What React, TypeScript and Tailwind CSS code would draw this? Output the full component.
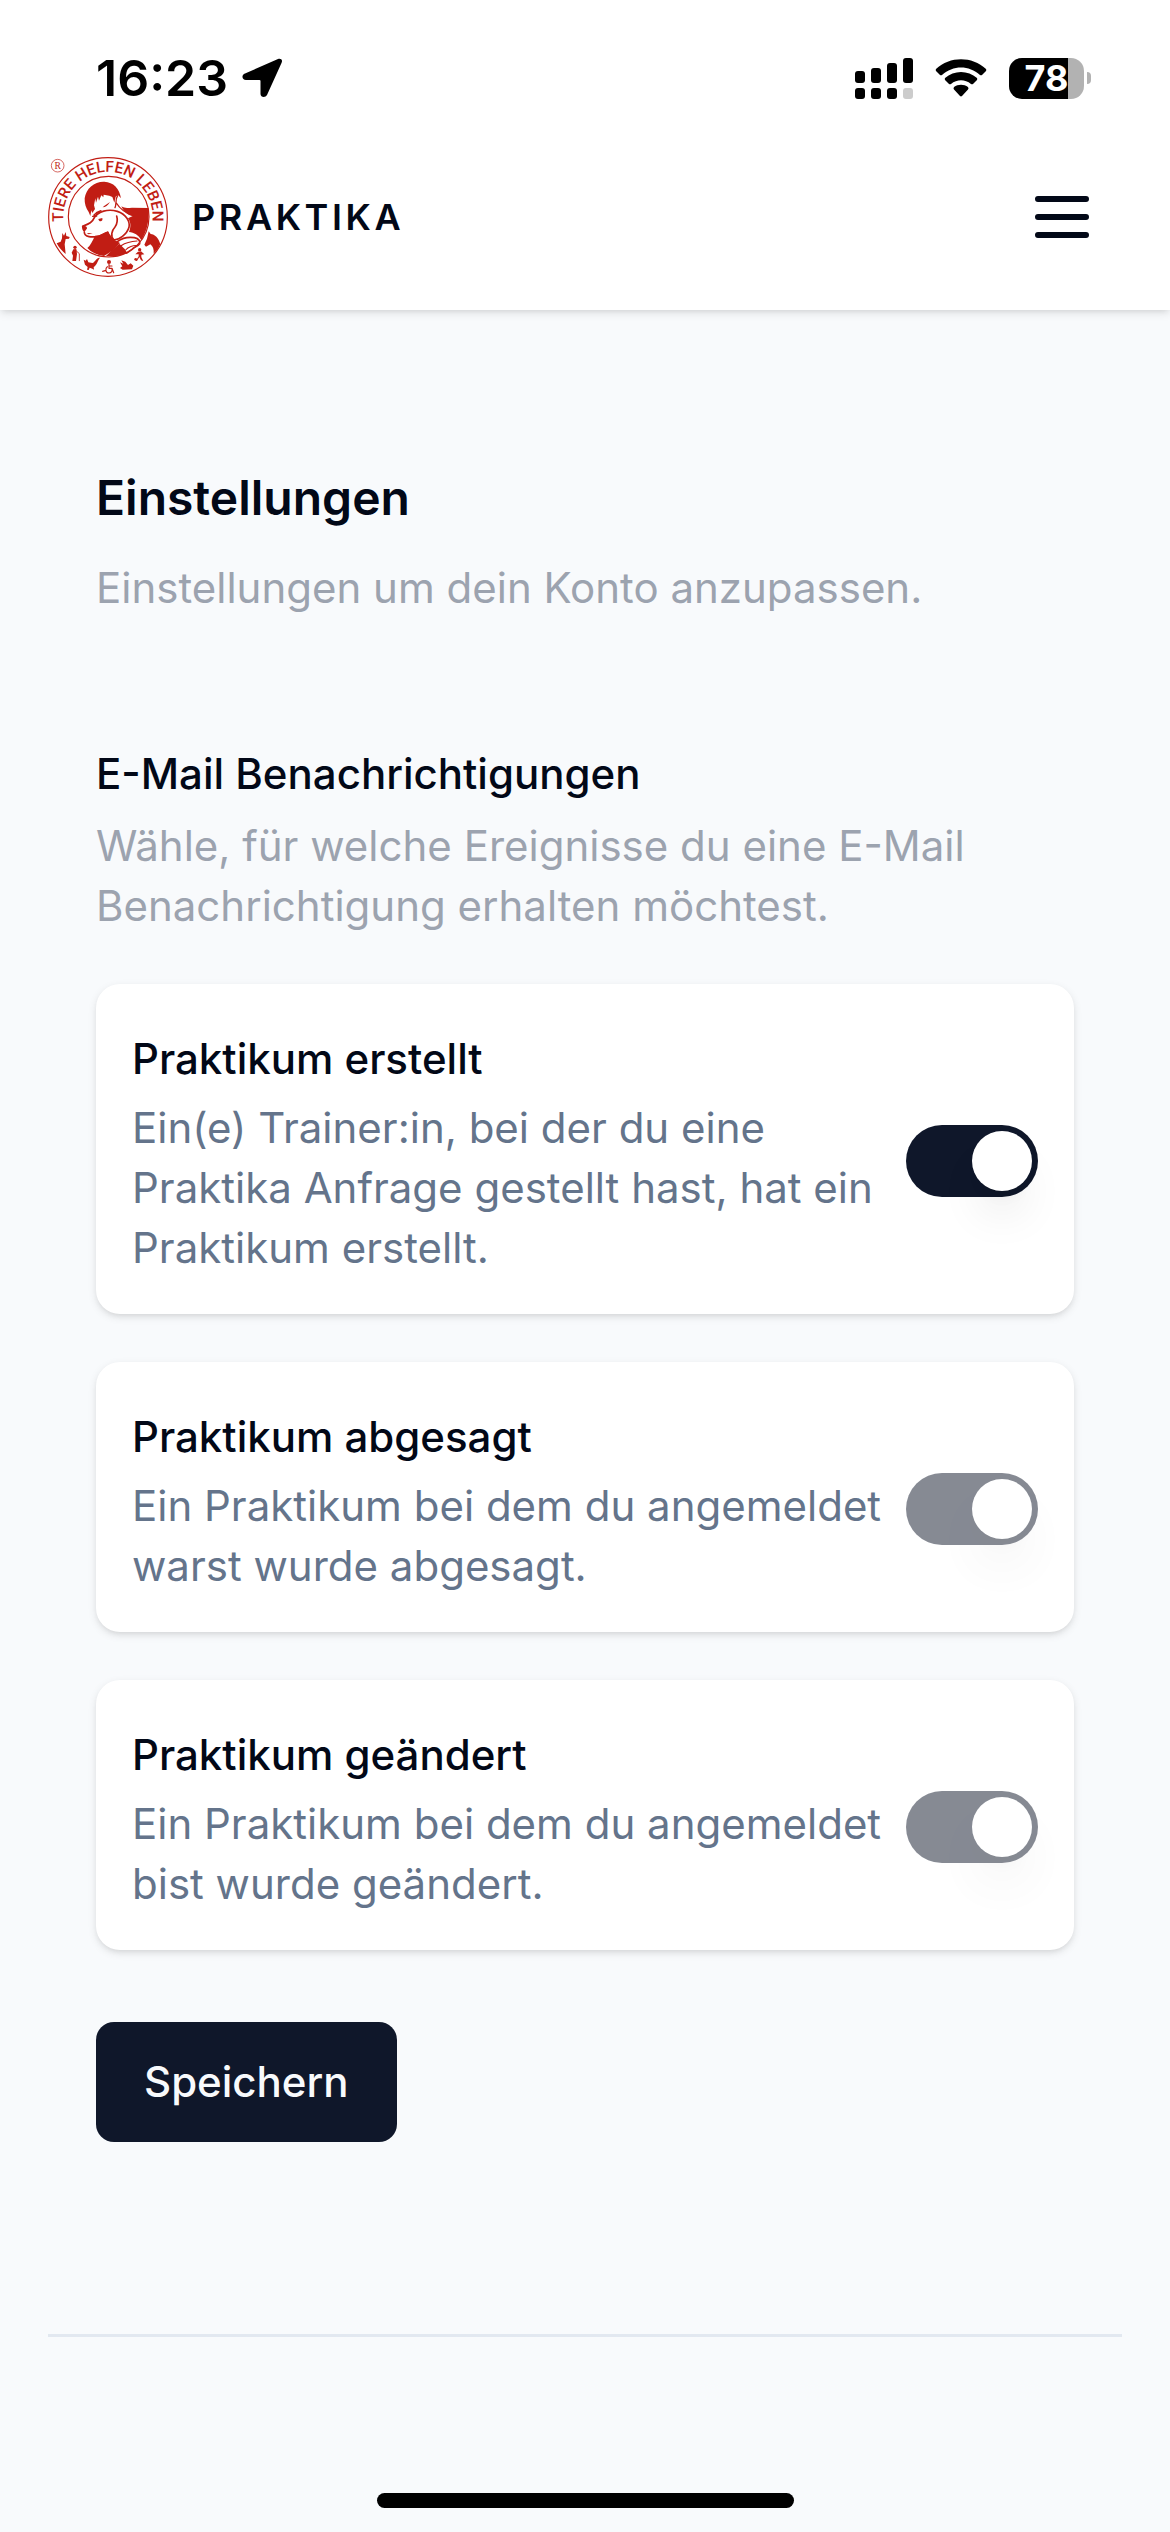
import { useState } from "react";

function Logo() {
  return (
    <svg viewBox="24 36 360 360" className="size-[120px] shrink-0" fill="none" stroke="#c11d14" role="img" aria-label="Tiere helfen Leben">
      <defs>
        <path id="ring" d="M75 251 A134 134 0 1 1 333 251" />
      </defs>
      <circle cx="204" cy="216" r="178" strokeWidth="3.5" />
      <circle cx="206" cy="215" r="121" strokeWidth="3.5" />
      <circle cx="53" cy="62" r="19" strokeWidth="2" />
      <text x="53" y="72" textAnchor="middle" fontSize="29" fill="#c11d14" stroke="none" fontFamily="Liberation Serif, serif">R</text>
      <text fontSize="46" fontWeight="500" fill="#c11d14" stroke="none" fontFamily="Roboto, sans-serif">
        <textPath href="#ring" startOffset="50%" textAnchor="middle">TIERE HELFEN LEBEN</textPath>
      </text>
      {/* child: hair, face and shoulders */}
      <g fill="#c11d14" stroke="none">
        <path d="M151 213 L146 201 C138 190 133 176 134 160 C138 130 163 109 193 110 C220 111 239 131 243 160 L234 150 L227 155 L223 173 L217 156 L208 152 L191 149 L190 157 L184 151 L177 167 L174 155 L168 173 L166 160 L162 181 L165 192 L157 204 L154 196 Z" />
        <path d="M244 184 C254 191 264 189 276 188 L325 189 C329 224 321 259 304 286 C296 270 282 262 267 261 C273 247 273 232 264 220 L278 213 C263 211 252 201 244 184 Z" />
        <path d="M165 272 C180 273 193 264 203 259 L220 283 L240 294 L216 318 L192 333 C171 330 154 322 142 309 C151 302 156 290 165 272 Z" />
        <path d="M198 333 L222 310 L238 296 L254 312 L262 324 C242 333 218 336 198 333 Z" />
        <path d="M188 187 C196 187 204 181 210 171 C203 177 195 179 188 187 Z" />
      </g>
      <g strokeWidth="4" strokeLinecap="round" strokeLinejoin="round">
        <path d="M233 152 C225 163 230 179 225 188 M229 174 C237 187 248 201 278 211" />
        <path d="M162 210 C170 201 177 205 183 197 L169 203 M158 214 L170 213" />
      </g>
      {/* dog */}
      <g strokeWidth="5" strokeLinecap="round" strokeLinejoin="round">
        <path d="M128 244 C145 237 157 233 163 218 C174 199 204 191 232 199 C257 207 271 229 267 247 C261 268 236 286 221 284 C211 273 215 257 225 246 C232 238 233 222 230 213" />
        <path d="M133 262 C133 278 158 276 172 275 C184 273 193 263 204 262" />
        <path d="M232 290 C248 278 262 275 283 278 C295 281 301 288 299 296 C292 306 283 304 275 314 L260 324" />
        <path d="M243 302 C254 295 272 289 291 288 M257 315 C264 306 280 300 292 302" strokeWidth="3.5" />
      </g>
      <path d="M126 243 C137 240 146 249 138 254 L133 262 C128 258 125 249 126 243 Z M175 222 L187 219 C190 230 177 233 175 222 Z M140 264 L158 265 L146 268 Z" fill="#c11d14" stroke="none" />
      {/* animals and people around the lower ring */}
      <g fill="#c11d14" stroke="none">
        <path d="M67 264 L72 272 L77 261 L79 273 L89 276 L87 281 L77 282 L74 298 L77 327 C67 320 57 308 50 295 L62 290 L66 280 Z" />
        <circle cx="105" cy="307" r="5" />
        <path d="M100 313 L109 312 L111 327 L108 348 L97 348 L99 332 L95 323 Z" />
        <path d="M131 344 L137 347 L141 342 L145 352 L157 354 C165 352 169 337 180 338 C172 347 172 359 161 366 L162 374 L157 371 L149 368 L146 375 L141 374 L143 366 L135 359 Z" />
        <circle cx="207" cy="351" r="6" />
        <path d="M240 352 L250 356 L244 346 L256 350 L264 360 L272 355 L280 362 L276 373 L248 374 L240 369 L247 364 Z" />
        <circle cx="299" cy="314" r="5" />
        <circle cx="287" cy="343" r="4" />
        <path d="M294 320 L303 319 L313 328 L304 329 L304 336 L310 349 L303 346 L298 336 L291 348 L287 348 L296 334 L296 328 L286 328 Z" />
        <path d="M326 259 L332 267 C344 267 356 280 361 297 C356 309 349 319 341 326 C342 312 339 304 331 298 L318 305 L313 299 L321 281 Z" />
      </g>
      <g strokeWidth="4" strokeLinecap="round" strokeLinejoin="round">
        <path d="M108 317 L118 326 V347" strokeWidth="2.5" />
        <path d="M207 358 V370 H216 L221 383 M207 363 H216 M202 365 C194 371 197 384 207 384 C214 384 217 379 216 374 M198 376 L188 379" strokeWidth="3.5" />
      </g>
    </svg>
  );
}

function Signal() {
  return (
    <svg viewBox="0 0 58 41" className="h-[41px] w-[58px]" aria-label="Signal">
      <rect x="0" y="13" width="10" height="12" rx="3" />
      <rect x="16" y="10" width="10" height="15" rx="3" />
      <rect x="32" y="5" width="10" height="20" rx="3" />
      <rect x="48" y="0" width="10" height="25" rx="3" />
      <rect x="0" y="30" width="10" height="11" rx="3" />
      <rect x="16" y="30" width="10" height="11" rx="3" />
      <rect x="32" y="30" width="10" height="11" rx="3" />
      <rect x="48" y="30" width="10" height="11" rx="3" fill="#cccccc" />
    </svg>
  );
}

function Wifi() {
  return (
    <svg viewBox="0 0 52 38" className="h-[38px] w-[52px]" aria-label="WLAN">
      <path d="M1 10 C15 -3 37 -3 51 10 Q51.500 11 51 12 L47 16 Q46 16.500 45 16 C34 6 18 6 7 16 Q6 16.500 5 16 L1 12 Q.5 11 1 10 Z" />
      <path d="M10 19 C19 11 33 11 42 19 Q42.500 20 42 21 L38 25 Q37 25.500 36 25 C30 20 22 20 16 25 Q15 25.500 14 25 L10 21 Q9.500 20 10 19 Z" />
      <path d="M19 28 C23 25 29 25 33 28 Q34 29.500 33 30.500 L27 37 Q26 37.800 25 37 L19 30.500 Q18 29.500 19 28 Z" />
    </svg>
  );
}

function Battery() {
  return (
    <div className="flex items-center gap-[3px]">
      <div className="flex h-[41px] w-[75px] items-center justify-center rounded-[13px] bg-[linear-gradient(to_right,#000_59px,#b2b2b2_59px)]">
        <span className="text-[36px] leading-[41px] font-bold text-white">78</span>
      </div>
      <div className="h-3 w-1 rounded-r-full bg-[#b2b2b2]" />
    </div>
  );
}

function StatusBar() {
  return (
    <div className="flex h-[124px] items-center justify-between pt-8 pr-[79px] pl-24 text-black">
      <div className="flex items-center gap-3.5">
        <span className="text-[50px] leading-[60px] font-semibold">16:23</span>
        <svg viewBox="0 0 40 40" className="size-10" aria-label="Ortung">
          <path d="M36 1 C39 0 41 2 39.500 5 L25 37 C23.500 40 18.500 39.500 18.500 36 V23 Q18.500 22 17.500 22 H4 C0 22 -1 17 3 15.500 Z" />
        </svg>
      </div>
      <div className="flex items-center gap-[22px]">
        <Signal />
        <Wifi />
        <Battery />
      </div>
    </div>
  );
}

type Option = { id: string; title: string; text: string; disabled: boolean };

const options: Option[] = [
  {
    id: "created",
    title: "Praktikum erstellt",
    text: "Ein(e) Trainer:in, bei der du eine Praktika Anfrage gestellt hast, hat ein Praktikum erstellt.",
    disabled: false,
  },
  {
    id: "cancelled",
    title: "Praktikum abgesagt",
    text: "Ein Praktikum bei dem du angemeldet warst wurde abgesagt.",
    disabled: true,
  },
  {
    id: "changed",
    title: "Praktikum geändert",
    text: "Ein Praktikum bei dem du angemeldet bist wurde geändert.",
    disabled: true,
  },
];

function OptionCard({ option }: { option: Option }) {
  const [on, setOn] = useState(true);
  return (
    <div className="flex items-center justify-between gap-5 rounded-3xl bg-white p-9 shadow-[0_3px_9px_rgba(0,0,0,0.1),0_3px_6px_-3px_rgba(0,0,0,0.1)]">
      <div className="min-w-0 flex-1">
        <label htmlFor={option.id} className="block leading-[78px] font-medium">
          {option.title}
        </label>
        <p id={`${option.id}-text`} className="text-[#64748b]">
          {option.text}
        </p>
      </div>
      <input
        id={option.id}
        type="checkbox"
        role="switch"
        checked={on}
        disabled={option.disabled}
        onChange={(e) => setOn(e.target.checked)}
        aria-describedby={`${option.id}-text`}
        className="mt-6 flex h-[72px] w-[132px] shrink-0 appearance-none items-center rounded-full bg-[#e2e8f0] p-1.5 before:size-[60px] before:rounded-full before:bg-white before:shadow-[0_30px_45px_-9px_rgba(0,0,0,0.1),0_12px_18px_-12px_rgba(0,0,0,0.1)] checked:justify-end checked:bg-[#0f172a] disabled:opacity-50"
      />
    </div>
  );
}

export default function App() {
  return (
    <div className="flex min-h-screen flex-col bg-[#f8fafc] font-[Inter,sans-serif] text-[42px] leading-[60px] text-[#020817]">
      <header className="bg-white shadow-[0_3px_9px_rgba(0,0,0,0.1),0_3px_6px_-3px_rgba(0,0,0,0.1)]">
        <StatusBar />
        <div className="flex items-center justify-between pt-[33px] pr-[72px] pb-[33px] pl-12">
          <a href="#" className="flex items-center gap-6">
            <Logo />
            <span className="text-[36px] leading-[48px] font-semibold tracking-widest">PRAKTIKA</span>
          </a>
          <button type="button" aria-label="Menü">
            <svg viewBox="0 0 24 24" className="size-[72px]" fill="none" stroke="currentColor" strokeWidth="2" strokeLinecap="round">
              <path d="M4 6h16M4 12h16M4 18h16" />
            </svg>
          </button>
        </div>
      </header>

      <main className="flex-1 px-12">
        <form className="border-b-[3px] border-[#e2e8f0] px-12 pt-[152px] pb-48" onSubmit={(e) => e.preventDefault()}>
          <h1 className="text-[48px] leading-[72px] font-semibold">Einstellungen</h1>
          <p className="mt-6 text-[#9ca3af]">Einstellungen um dein Konto anzupassen.</p>

          <h2 className="mt-[120px] leading-[72px] font-medium">E-Mail Benachrichtigungen</h2>
          <p className="mt-1.5 text-[#9ca3af]">
            Wähle, für welche Ereignisse du eine E-Mail Benachrichtigung erhalten möchtest.
          </p>

          <div className="mt-12 flex flex-col gap-12">
            {options.map((option) => (
              <OptionCard key={option.id} option={option} />
            ))}
          </div>

          <button type="submit" className="mt-[72px] rounded-[18px] bg-[#0f172a] px-12 py-[30px] font-medium text-[#f8fafc]">
            Speichern
          </button>
        </form>
      </main>

      <div className="flex justify-center pb-6">
        <div className="h-[15px] w-[417px] rounded-full bg-black" />
      </div>
    </div>
  );
}
